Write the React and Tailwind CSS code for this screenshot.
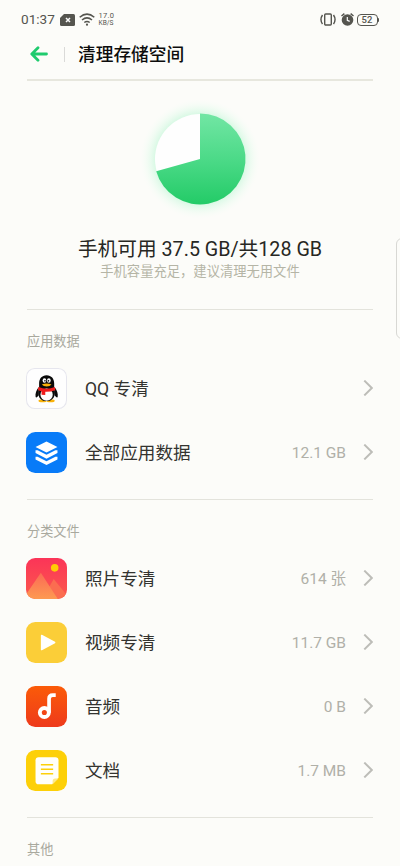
import { Fragment } from 'react';

const QQIcon = () => (
  <svg width="41" height="41" viewBox="0 0 40 40">
    <rect x="0.5" y="0.5" width="39" height="39" rx="8" fill="#fefefe" stroke="#e6e6ee" />
    <ellipse cx="16.2" cy="31.900" rx="4" ry="1.500" fill="#f9b20a" />
    <ellipse cx="24" cy="31.900" rx="4" ry="1.500" fill="#f9b20a" />
    <path d="M12.400 18.500C10 21.500 8.800 25 9.400 28.400c.6 1 2-.3 3-1.800M27.900 18.500c2.400 3 3.600 6.500 3 9.900-.6 1-2-.3-3-1.800" fill="#0a0a0a" />
    <path d="M20.100 7c-4.700 0-7.300 3.500-7.300 8v5c-1.500 3-1.700 12.300 7.300 12.300s8.800-9.300 7.400-12.300v-5c0-4.500-2.700-8-7.400-8z" fill="#0a0a0a" />
    <ellipse cx="20.100" cy="26" rx="6" ry="5.900" fill="#fefefe" />
    <ellipse cx="18" cy="12.200" rx="1.800" ry="2.200" fill="#fefefe" />
    <ellipse cx="22.300" cy="12.200" rx="1.800" ry="2.200" fill="#fefefe" />
    <circle cx="18.500" cy="12.500" r="0.800" fill="#0a0a0a" />
    <circle cx="21.900" cy="12.500" r="0.800" fill="#0a0a0a" />
    <path d="M15.400 16.100q4.700-2 9.500 0-1.500 2-4.700 2t-4.800-2z" fill="#f9b20a" />
    <path d="M12.200 18.600q8 3.200 15.900 0l.5 3.100q-4.700 1.700-9.800 1.500v3.200l-3.600-.4v-3.200q-2-.4-3.500-1.300z" fill="#ef1c1c" />
  </svg>
);

const LayersIcon = () => (
  <svg width="41" height="41" viewBox="0 0 40 40">
    <rect width="40" height="40" rx="9" fill="#087bf8" />
    <path d="M20 9.300 30.700 14.600 20 19.900 9.300 14.600z" fill="#fff" />
    <path d="M9.300 17.800 11.300 17.800 20 22.200 28.700 17.800 30.700 17.800v2.700L20 26 9.300 20.500z" fill="#fff" />
    <path d="M9.300 24.100 11.300 24.100 20 28.500 28.700 24.100 30.700 24.100v2.700L20 32.300 9.300 26.800z" fill="#fff" />
  </svg>
);

const PhotoIcon = () => (
  <svg width="41" height="41" viewBox="0 0 40 40">
    <defs>
      <linearGradient id="photoBg" x1="0" y1="0" x2="0" y2="1">
        <stop offset="0" stopColor="#fb3458" />
        <stop offset="1" stopColor="#fb5a4c" />
      </linearGradient>
      <linearGradient id="photoHill" x1="0" y1="0" x2="0" y2="1">
        <stop offset="0" stopColor="#fb6a55" />
        <stop offset="1" stopColor="#fd9a52" />
      </linearGradient>
      <clipPath id="photoClip">
        <rect width="40" height="40" rx="9" />
      </clipPath>
    </defs>
    <g clipPath="url(#photoClip)">
      <rect width="40" height="40" fill="url(#photoBg)" />
      <path d="M27 20.500 43 40H16z" fill="#fb6d50" />
      <path d="M14.500 14.500 31 40H-3z" fill="url(#photoHill)" />
      <circle cx="28" cy="9.600" r="3.700" fill="#ffcb05" />
    </g>
  </svg>
);

const VideoIcon = () => (
  <svg width="41" height="41" viewBox="0 0 40 40">
    <rect width="40" height="40" rx="9" fill="#fbce38" />
    <path d="M15.200 13.100 28 20 15.200 26.900z" fill="#fff" stroke="#fff" strokeWidth="1.400" strokeLinejoin="round" />
  </svg>
);

const AudioIcon = () => (
  <svg width="41" height="41" viewBox="0 0 40 40">
    <defs>
      <linearGradient id="audioBg" x1="0" y1="0" x2="0" y2="1">
        <stop offset="0" stopColor="#fb5b08" />
        <stop offset="1" stopColor="#ee3a1c" />
      </linearGradient>
    </defs>
    <rect width="40" height="40" rx="9" fill="url(#audioBg)" />
    <circle cx="17.900" cy="25.800" r="4.400" fill="none" stroke="#fff" strokeWidth="3.800" />
    <path d="M22.500 26V12.500q0-3.600 3.600-3.600h2.900" fill="none" stroke="#fff" strokeWidth="3.600" />
  </svg>
);

const DocIcon = () => (
  <svg width="41" height="41" viewBox="0 0 40 40">
    <rect width="40" height="40" rx="9" fill="#fdd008" />
    <path d="M12.300 7h16.400q3 0 3 3v17l-6.200 6.500H12.300q-3 0-3-3V10q0-3 3-3z" fill="#fffffa" />
    <path d="M31.700 27.800 26 33.500v-3.200q0-2.500 2.500-2.500z" fill="#fde98a" />
    <path d="M14.500 14.300h12M14.500 18.700h12M14.500 23.100h12" stroke="#fdd008" strokeWidth="1.500" />
  </svg>
);

const groups = [
  {
    title: '应用数据',
    items: [
      { name: 'QQ 专清', icon: QQIcon },
      { name: '全部应用数据', value: '12.1 GB', icon: LayersIcon },
    ],
  },
  {
    title: '分类文件',
    items: [
      { name: '照片专清', value: '614 张', icon: PhotoIcon },
      { name: '视频专清', value: '11.7 GB', icon: VideoIcon },
      { name: '音频', value: '0 B', icon: AudioIcon },
      { name: '文档', value: '1.7 MB', icon: DocIcon },
    ],
  },
  { title: '其他', items: [] },
];

const StatusBar = () => (
  <div className="flex h-[38px] items-center pt-[1px] pl-[21px] pr-[21px] text-[#55554f]">
    <span className="w-[37px] pt-px text-[13.600px] leading-none whitespace-nowrap">01:37</span>
    <svg className="ml-[1.500px]" width="15" height="12" viewBox="0 0 15 12">
      <path d="M4 0h9.500Q15 0 15 1.500v9q0 1.500-1.500 1.500h-12Q0 12 0 10.500V4z" fill="currentColor" />
      <path d="m6 4 4 4m0-4-4 4" stroke="#fcfcfc" strokeWidth="1.500" />
    </svg>
    <svg className="ml-1" width="16" height="13" viewBox="0 0 16 13" fill="none" stroke="currentColor" strokeWidth="1.500">
      <path d="M.7 4.300Q8-2 15.300 4.300M3 7q5-4.200 10 0M5.300 9.500q2.700-2.200 5.400 0" />
      <circle cx="8" cy="11.700" r="1.100" fill="currentColor" stroke="none" />
    </svg>
    <div className="ml-1 text-[7.500px] leading-[6.500px]">
      <div className="tracking-[0.300px]">17.0</div>
      <div className="text-[6.600px]">KB/S</div>
    </div>
    <svg className="ml-auto" width="16" height="13" viewBox="0 0 16 13" fill="none" stroke="currentColor" strokeWidth="1.400">
      <rect x="4.700" y="1" width="6.600" height="11" rx="1" />
      <path d="M2.500 2Q-.6 6.500 2.500 11M13.500 2q3.100 4.500 0 9" />
    </svg>
    <svg className="ml-[5px]" width="13" height="13" viewBox="0 0 13 13">
      <circle cx="6.500" cy="7" r="5.800" fill="currentColor" />
      <path d="M.5 3 3.400.6M12.500 3 9.600.6" stroke="currentColor" strokeWidth="1.500" />
      <path d="M6.300 4v3.400l2.400 1" stroke="#fcfcfc" strokeWidth="1.200" fill="none" />
    </svg>
    <div className="ml-[3px] flex h-3 w-[21px] items-center justify-center rounded-[4px] border border-current pt-px text-[9.500px] leading-none font-medium">
      52
    </div>
    <div className="h-1 w-[1.500px] rounded-r bg-current" />
  </div>
);

const Header = () => (
  <header className="mx-[27px] flex h-[43px] items-center border-b-2 border-[#e7e7de] pb-[9px]">
    <svg className="ml-[3px]" width="18" height="16" viewBox="0 0 18 16" fill="none" stroke="#1fcb6e" strokeWidth="2.800" strokeLinecap="round" strokeLinejoin="round">
      <path d="M8 1.800 1.800 8 8 14.200M2.500 8h14" />
    </svg>
    <div className="ml-4 h-[15px] w-px bg-[#dadad8]" />
    <h1 className="ml-[13px] pt-[3px] text-[17.700px] leading-none font-medium text-[#0c0c0c]">清理存储空间</h1>
  </header>
);

const StoragePie = () => (
  <svg width="140" height="140" viewBox="-70 -70 140 140">
    <defs>
      <linearGradient id="pieFill" x1="0" y1="0" x2="0" y2="1">
        <stop offset="0" stopColor="#72e6a4" />
        <stop offset="0.5" stopColor="#4cda88" />
        <stop offset="1" stopColor="#23cb67" />
      </linearGradient>
      <radialGradient id="pieGlow">
        <stop offset="0.72" stopColor="#b4f5cf" stopOpacity="0.6" />
        <stop offset="1" stopColor="#f0fff5" stopOpacity="0" />
      </radialGradient>
    </defs>
    <circle r="60" fill="url(#pieGlow)" />
    <circle r="45" fill="#fefefe" />
    <path d="M0 0V-45.500A45.500 45.500 0 1 1 -43.800 12.200z" fill="url(#pieFill)" />
  </svg>
);

const Row = ({ name, value, icon: Icon }) => (
  <div className="flex h-16 items-center pr-[27px] pl-[26px]">
    <Icon />
    <span className="ml-[18px] pt-[3px] text-[17.600px] text-[#33332f]">{name}</span>
    <span className="ml-auto pt-[3px] text-[15.500px] text-[#b0b0a8]">{value}</span>
    <svg className="ml-[17px]" width="10" height="16" viewBox="0 0 10 16" fill="none" stroke="#bdbdb8" strokeWidth="2">
      <path d="M1.300.6 8.800 8l-7.500 7.400" />
    </svg>
  </div>
);

const App = () => (
  <div className="relative h-[866px] w-[400px] overflow-hidden bg-[#fcfcf9] font-['Roboto','Noto_Sans_CJK_SC',sans-serif]">
    <StatusBar />
    <Header />

    {/* Storage summary */}
    <section className="flex h-[228px] flex-col items-center pt-2">
      <StoragePie />
      <p className="mt-[7px] text-[19.700px] leading-[28px] whitespace-nowrap text-[#272723]">手机可用 37.5 GB/共128 GB</p>
      <p className="-mt-px text-[13.300px] leading-[18px] text-[#b5b5a6]">手机容量充足，建议清理无用文件</p>
    </section>

    {groups.map((group) => (
      <Fragment key={group.title}>
        <div className="mx-[27px] h-px bg-[#e3e3dc]" />
        <h2 className="flex h-[46px] items-center pt-[17px] pl-[27px] text-[13.200px] text-[#a9a99e]">{group.title}</h2>
        {group.items.map((item) => (
          <Row key={item.name} {...item} />
        ))}
        <div className="h-[15px]" />
      </Fragment>
    ))}

    {/* Edge panel handle */}
    <div className="absolute top-[238px] -right-1 h-[101px] w-2 rounded-l-md border border-[#d8d8d4]" />
  </div>
);

export default App;
